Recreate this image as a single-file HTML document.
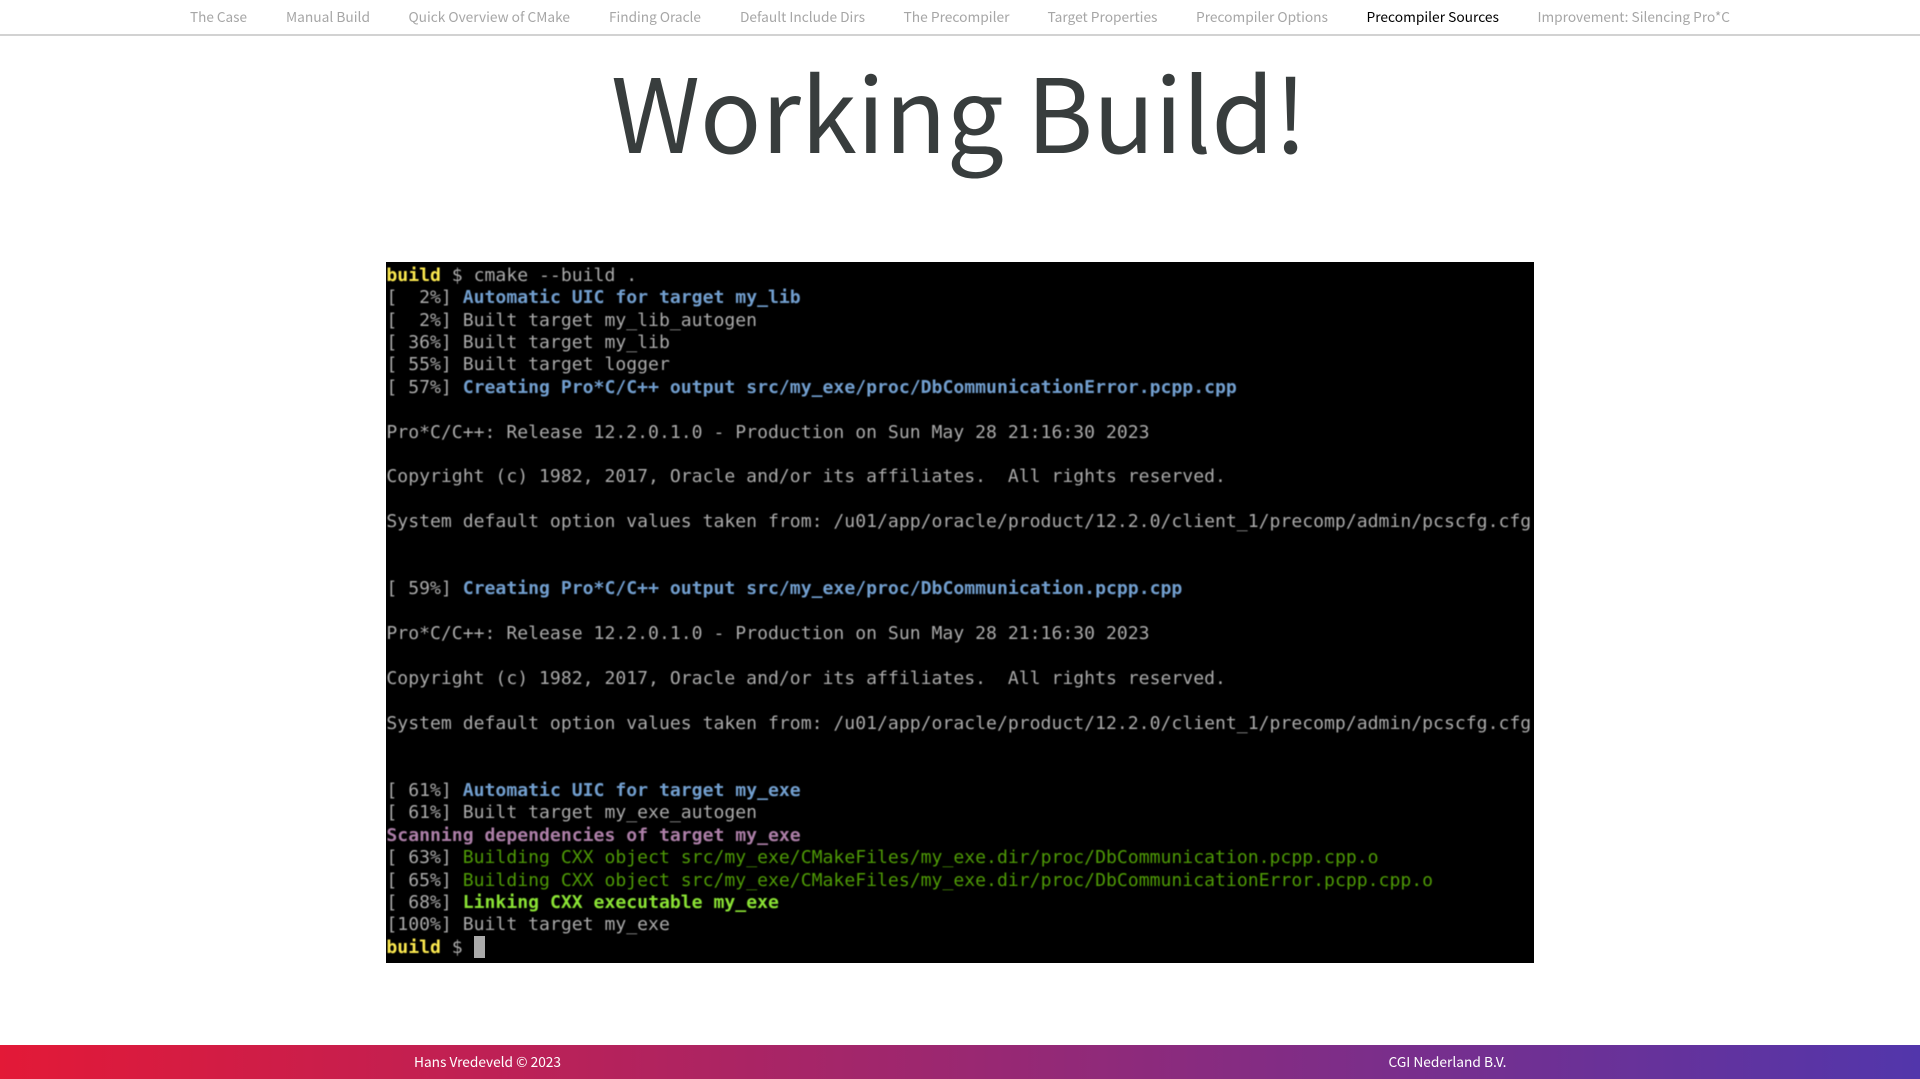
<!DOCTYPE html>
<html lang="en">
<head>
<meta charset="utf-8">
<title>Working Build!</title>
<style>
html,body{margin:0;padding:0;background:#fff;width:1920px;height:1079px;overflow:hidden}
svg.ui{position:absolute;left:0;top:0;display:block}
svg.ui text{font-family:"Noto Sans CJK JP","Liberation Sans",sans-serif}
#nav{position:absolute;left:0;top:0;width:1920px;height:34px;border-bottom:2px solid #d2d2d2}
#foot{position:absolute;left:0;top:1045px;width:1920px;height:34px;background:linear-gradient(90deg,#e31937,#5236ab)}
#term{position:absolute;left:386px;top:262px;width:1147.5px;height:701px;background:#000;overflow:hidden}
#term pre{position:absolute;left:.4px;top:2.7px;margin:0;font:18.11px/22.41px "DejaVu Sans Mono",monospace;color:#aaa;filter:blur(.6px)}
#term b{font-weight:700}
.y{color:#fce94f}.b{color:#729fcf}.p{color:#ad7fa8}.g{color:#4e9a06}.l{color:#8ae234}
#cur{position:absolute;left:88px;top:674px;width:11px;height:22px;background:#aaa}
</style>
</head>
<body>
<div id="nav"></div>
<div id="foot"></div>
<svg class="ui" width="1920" height="1079" viewBox="0 0 1920 1079">
<g font-size="13.6" fill="#a6a6a6">
<text x="190" y="22" textLength="57" lengthAdjust="spacingAndGlyphs">The Case</text>
<text x="286" y="22" textLength="84" lengthAdjust="spacingAndGlyphs">Manual Build</text>
<text x="408.5" y="22" textLength="161.5" lengthAdjust="spacingAndGlyphs">Quick Overview of CMake</text>
<text x="609" y="22" textLength="92" lengthAdjust="spacingAndGlyphs">Finding Oracle</text>
<text x="740" y="22" textLength="125" lengthAdjust="spacingAndGlyphs">Default Include Dirs</text>
<text x="903.5" y="22" textLength="106" lengthAdjust="spacingAndGlyphs">The Precompiler</text>
<text x="1047.5" y="22" textLength="110" lengthAdjust="spacingAndGlyphs">Target Properties</text>
<text x="1196" y="22" textLength="132" lengthAdjust="spacingAndGlyphs">Precompiler Options</text>
<text x="1366.5" y="22" textLength="132.5" lengthAdjust="spacingAndGlyphs" fill="#000">Precompiler Sources</text>
<text x="1537.5" y="22" textLength="192.5" lengthAdjust="spacingAndGlyphs">Improvement: Silencing Pro*C</text>
</g>
<text x="611" y="153" font-size="102" fill="#383d3d" textLength="696" lengthAdjust="spacingAndGlyphs">Working Build!</text>
<g font-size="13.6" fill="#fff">
<text x="414" y="1067" textLength="147" lengthAdjust="spacingAndGlyphs">Hans Vredeveld © 2023</text>
<text x="1388.5" y="1067" textLength="118" lengthAdjust="spacingAndGlyphs">CGI Nederland B.V.</text>
</g>
</svg>
<div id="term"><pre><b class="y">build</b> $ cmake --build .
[  2%] <b class="b">Automatic UIC for target my_lib</b>
[  2%] Built target my_lib_autogen
[ 36%] Built target my_lib
[ 55%] Built target logger
[ 57%] <b class="b">Creating Pro*C/C++ output src/my_exe/proc/DbCommunicationError.pcpp.cpp</b>

Pro*C/C++: Release 12.2.0.1.0 - Production on Sun May 28 21:16:30 2023

Copyright (c) 1982, 2017, Oracle and/or its affiliates.  All rights reserved.

System default option values taken from: /u01/app/oracle/product/12.2.0/client_1/precomp/admin/pcscfg.cfg


[ 59%] <b class="b">Creating Pro*C/C++ output src/my_exe/proc/DbCommunication.pcpp.cpp</b>

Pro*C/C++: Release 12.2.0.1.0 - Production on Sun May 28 21:16:30 2023

Copyright (c) 1982, 2017, Oracle and/or its affiliates.  All rights reserved.

System default option values taken from: /u01/app/oracle/product/12.2.0/client_1/precomp/admin/pcscfg.cfg


[ 61%] <b class="b">Automatic UIC for target my_exe</b>
[ 61%] Built target my_exe_autogen
<b class="p">Scanning dependencies of target my_exe</b>
[ 63%] <span class="g">Building CXX object src/my_exe/CMakeFiles/my_exe.dir/proc/DbCommunication.pcpp.cpp.o</span>
[ 65%] <span class="g">Building CXX object src/my_exe/CMakeFiles/my_exe.dir/proc/DbCommunicationError.pcpp.cpp.o</span>
[ 68%] <b class="l">Linking CXX executable my_exe</b>
[100%] Built target my_exe
<b class="y">build</b> $ </pre><div id="cur"></div></div>
</body>
</html>
